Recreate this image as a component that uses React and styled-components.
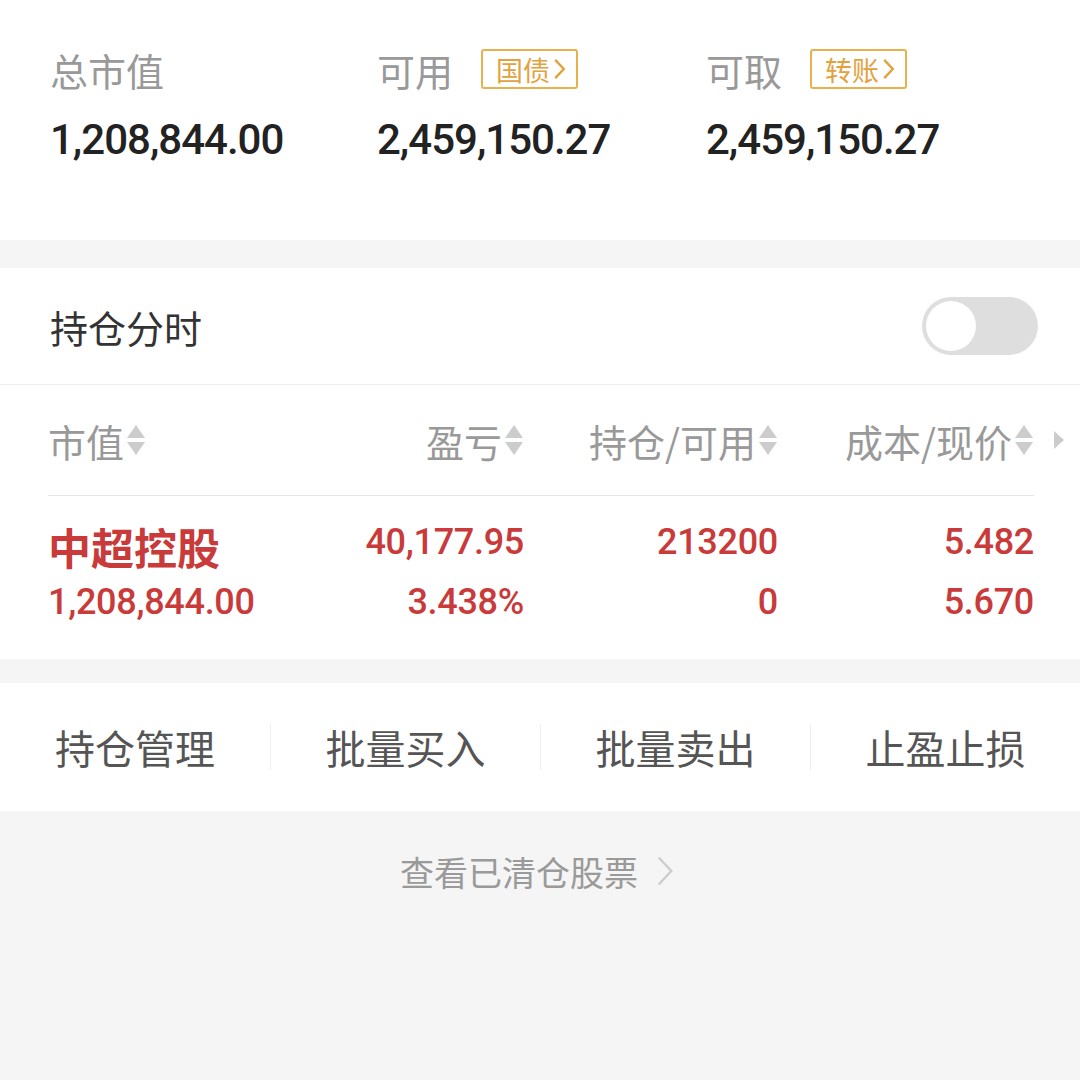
import React from 'react'
import styled, { createGlobalStyle } from 'styled-components'

const Global = createGlobalStyle`
  body {
    margin: 0;
    background: #f5f5f5;
    font-family: Roboto, "Noto Sans CJK SC", sans-serif;
  }
`;

const Page = styled.div`
  width: 1080px;
  height: 1080px;
  background: #f5f5f5;
  display: flex;
  flex-direction: column;
`;

const Summary = styled.div`
  background: #fff;
  height: 240px;
  box-sizing: border-box;
  padding: 45px 0 0 50px;
  display: grid;
  grid-template-columns: 327px 329px 300px;
`;

const Stat = styled.div`
  display: flex;
  flex-direction: column;
`;

const StatHead = styled.div`
  display: flex;
  align-items: center;
  gap: 28px;
  height: 48px;
`;

const Label = styled.span`
  font-family: "Noto Sans CJK SC", sans-serif;
  font-size: 38px;
  color: #999;
`;

const Badge = styled.span`
  display: inline-flex;
  align-items: center;
  height: 40px;
  box-sizing: border-box;
  padding: 0 10px 0 13px;
  border: 2px solid #e9b14c;
  border-radius: 3px;
  font-family: "Noto Sans CJK SC", sans-serif;
  font-size: 27px;
  color: #e2a23e;
  gap: 3px;
`;

const Amount = styled.div`
  margin-top: 22px;
  font-size: 42px;
  font-weight: 500;
  color: #222;
  letter-spacing: -1px;
`;

const Section = styled.div`
  background: #fff;
  margin-top: ${p => p.gap}px;
`;

const SwitchRow = styled.div`
  display: flex;
  align-items: center;
  justify-content: space-between;
  height: 116px;
  padding: 0 42px 0 50px;
  border-bottom: 1px solid #eee;
`;

const Title = styled.span`
  font-family: "Noto Sans CJK SC", sans-serif;
  font-size: 38px;
  color: #333;
`;

const Toggle = styled.div`
  width: 116px;
  height: 58px;
  border-radius: 29px;
  background: #dedede;
  display: flex;
  align-items: center;
  padding-left: 4px;
  box-sizing: border-box;
`;

const Knob = styled.div`
  width: 50px;
  height: 50px;
  border-radius: 50%;
  background: #fff;
`;

const grid = `
  display: grid;
  grid-template-columns: 222px 254px 254px 256px;
  margin: 0 46px 0 48px;
`;

const HeadRow = styled.div`
  ${grid}
  height: 110px;
  align-items: center;
  border-bottom: 1px solid #e6e6e6;
  position: relative;
`;

const HeadCell = styled.div`
  display: flex;
  align-items: center;
  justify-content: ${p => (p.left ? 'flex-start' : 'flex-end')};
  font-family: "Noto Sans CJK SC", sans-serif;
  font-size: 38px;
  color: #999;
  gap: 2px;
`;

const More = styled.svg`
  position: absolute;
  right: -32px;
  top: 44px;
`;

const SortIcon = () => (
  <svg width="20" height="32" viewBox="0 0 20 32">
    <path d="M10 1 L19 14 L1 14 Z" fill="#cccccc" />
    <path d="M1 18 L19 18 L10 31 Z" fill="#cccccc" />
  </svg>
);

const DataRow = styled.div`
  ${grid}
  padding: 16px 0 27px;
`;

const DataCell = styled.div`
  display: flex;
  flex-direction: column;
  align-items: ${p => (p.left ? 'flex-start' : 'flex-end')};
  color: #c93a3a;
  font-size: 36px;
  font-weight: 500;
  line-height: 60px;
  letter-spacing: -0.3px;
`;

const Name = styled.span`
  font-family: "Noto Sans CJK SC", sans-serif;
  font-size: 43px;
  font-weight: 700;
  line-height: 52px;
  padding-top: 8px;
  letter-spacing: 0;
`;

const Actions = styled.div`
  display: grid;
  grid-template-columns: repeat(4, 1fr);
  height: 128px;
  align-items: center;
`;

const Action = styled.div`
  display: flex;
  justify-content: center;
  align-items: center;
  height: 46px;
  font-family: "Noto Sans CJK SC", sans-serif;
  font-size: 40px;
  color: #555;
  border-left: ${p => (p.first ? 'none' : '1px solid #eeeeee')};
`;

const Footer = styled.div`
  display: flex;
  justify-content: center;
  align-items: center;
  gap: 18px;
  height: 120px;
  font-family: "Noto Sans CJK SC", sans-serif;
  font-size: 34px;
  color: #9a9a9a;
  padding-right: 6px;
`;

const Chevron = ({ color, w, h, sw }) => (
  <svg width={w} height={h} viewBox="0 0 10 18">
    <path d="M1.5 1.5 L8.5 9 L1.5 16.5" fill="none" stroke={color} strokeWidth={sw} />
  </svg>
);

export default function App() {
  const stats = [
    { label: '总市值', value: '1,208,844.00' },
    { label: '可用', badge: '国债', value: '2,459,150.27' },
    { label: '可取', badge: '转账', value: '2,459,150.27' },
  ];

  return (
    <Page>
      <Global />
      <Summary>
        {stats.map(s => (
          <Stat key={s.label}>
            <StatHead>
              <Label>{s.label}</Label>
              {s.badge && (
                <Badge>
                  {s.badge}
                  <Chevron color="#e2a23e" w={13} h={22} sw={2} />
                </Badge>
              )}
            </StatHead>
            <Amount>{s.value}</Amount>
          </Stat>
        ))}
      </Summary>

      <Section gap={28}>
        <SwitchRow>
          <Title>持仓分时</Title>
          <Toggle>
            <Knob />
          </Toggle>
        </SwitchRow>
        <HeadRow>
          <HeadCell left>市值<SortIcon /></HeadCell>
          <HeadCell>盈亏<SortIcon /></HeadCell>
          <HeadCell>持仓/可用<SortIcon /></HeadCell>
          <HeadCell>成本/现价<SortIcon /></HeadCell>
          <More width="14" height="22" viewBox="0 0 14 22">
            <path d="M2 2 L12 11 L2 20 Z" fill="#cccccc" />
          </More>
        </HeadRow>
        <DataRow>
          <DataCell left>
            <Name>中超控股</Name>
            <span>1,208,844.00</span>
          </DataCell>
          <DataCell>
            <span>40,177.95</span>
            <span>3.438%</span>
          </DataCell>
          <DataCell>
            <span>213200</span>
            <span>0</span>
          </DataCell>
          <DataCell>
            <span>5.482</span>
            <span>5.670</span>
          </DataCell>
        </DataRow>
      </Section>

      <Section gap={24}>
        <Actions>
          <Action first>持仓管理</Action>
          <Action>批量买入</Action>
          <Action>批量卖出</Action>
          <Action>止盈止损</Action>
        </Actions>
      </Section>

      <Footer>
        查看已清仓股票
        <Chevron color="#cccccc" w={18} h={34} sw={1.3} />
      </Footer>
    </Page>
  );
}
